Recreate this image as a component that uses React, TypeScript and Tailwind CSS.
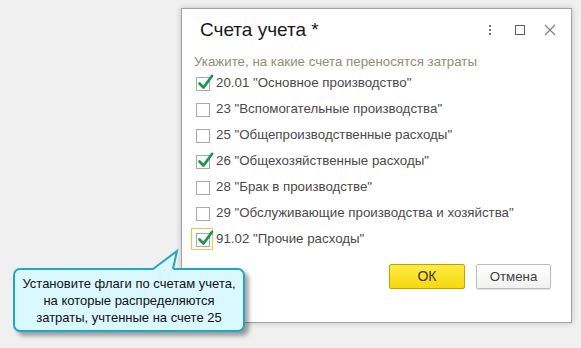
import { FC } from 'react';

const accounts = [
  { label: '20.01 "Основное производство"', checked: true },
  { label: '23 "Вспомогательные производства"', checked: false },
  { label: '25 "Общепроизводственные расходы"', checked: false },
  { label: '26 "Общехозяйственные расходы"', checked: true },
  { label: '28 "Брак в производстве"', checked: false },
  { label: '29 "Обслуживающие производства и хозяйства"', checked: false },
  { label: '91.02 "Прочие расходы"', checked: true, focused: true },
];

const CheckBox: FC<{ checked: boolean; focused?: boolean }> = ({ checked, focused }) => (
  <div className="relative top-[1px] ml-[2px] h-[14px] w-[14px] border border-[#a8a8a8] bg-white">
    {focused && (
      <div className="absolute left-[-6px] top-[-6px] h-[22px] w-[22px] border border-[#f2c640]" />
    )}
    {checked && (
      <svg className="absolute left-[0px] top-[-5px]" width="18" height="18" viewBox="0 0 18 18">
        <path d="M2.5 10.5 L6.5 14.5 L15 3" fill="none" stroke="#17994a" strokeWidth="2.8" strokeLinecap="round" strokeLinejoin="round" />
      </svg>
    )}
  </div>
);

const App: FC = () => {
  return (
    <div
      className="relative h-[348px] w-[581px] overflow-hidden bg-[#f0f0f0]"
      style={{ fontFamily: '"Liberation Sans", Arial, sans-serif' }}
    >
      <div className="ml-[181px] pt-[8px]">
        <div className="flex h-[315px] w-[391px] flex-col border border-[#a3a3a3] bg-white pl-[12px] shadow-[0_0_6px_rgba(0,0,0,0.2)]">
          <div className="flex h-[42px] items-center pr-[15px]">
            <div className="flex-1 pl-[6px] text-[19px] text-[#1a1a1a]">Счета учета *</div>
            <div className="flex items-center gap-[3px]">
              <div className="flex w-[24px] flex-col items-center gap-[2px]">
                <span className="h-[2px] w-[2px] bg-[#707070]" />
                <span className="h-[2px] w-[2px] bg-[#707070]" />
                <span className="h-[2px] w-[2px] bg-[#707070]" />
              </div>
              <div className="flex w-[30px] justify-center">
                <div className="h-[10px] w-[10px] border border-[#606060]" />
              </div>
              <svg width="12" height="12" viewBox="0 0 12 12" className="ml-[6px]">
                <path d="M1 1 L11 11 M11 1 L1 11" stroke="#808080" strokeWidth="1.2" />
              </svg>
            </div>
          </div>

          <div className="mt-[4px] h-[14px] text-[13.3px] leading-[14px] text-[#938e72]">
            Укажите, на какие счета переносятся затраты
          </div>

          <div className="mt-[1px] flex flex-col">
            {accounts.map((a) => (
              <div key={a.label} className="flex h-[26px] items-center gap-[6px]">
                <CheckBox checked={a.checked} focused={a.focused} />
                <span className="text-[13.3px] text-[#4a4a4a]">{a.label}</span>
              </div>
            ))}
          </div>

          <div className="mt-[12px] flex justify-end gap-[11px] pr-[20px]">
            <button className="h-[25px] w-[76px] rounded-[2px] border border-[#c4a000] bg-gradient-to-b from-[#ffec3d] to-[#f7d800] text-[14px] text-[#333]">
              ОК
            </button>
            <button className="h-[25px] w-[75px] rounded-[2px] border border-[#bdbdbd] bg-gradient-to-b from-white to-[#f1f1f1] text-[13.3px] text-[#404040] shadow-[0_1px_1px_rgba(0,0,0,0.12)]">
              Отмена
            </button>
          </div>
        </div>
      </div>

      <div className="absolute left-[13px] top-[268px] h-[64px] w-[232px]">
        <div className="flex h-full w-full flex-col items-center justify-center rounded-[7px] border-2 border-[#1ea8c8] bg-[#d9f8ff] text-[13px] leading-[17px] text-[#111] shadow-[4px_4px_4px_rgba(0,0,0,0.35)]">
          <div>Установите флаги по счетам учета,</div>
          <div>на которые распределяются</div>
          <div>затраты, учтенные на счете 25</div>
        </div>
        <svg className="absolute left-[136px] top-[-20px]" width="32" height="24" viewBox="0 0 32 24">
          <polygon points="3,23 28,3 24,23" fill="#d9f8ff" />
          <polyline points="4,21 28,3 24,21" fill="none" stroke="#1ea8c8" strokeWidth="2" strokeLinejoin="miter" />
        </svg>
      </div>
    </div>
  );
};

export default App;
